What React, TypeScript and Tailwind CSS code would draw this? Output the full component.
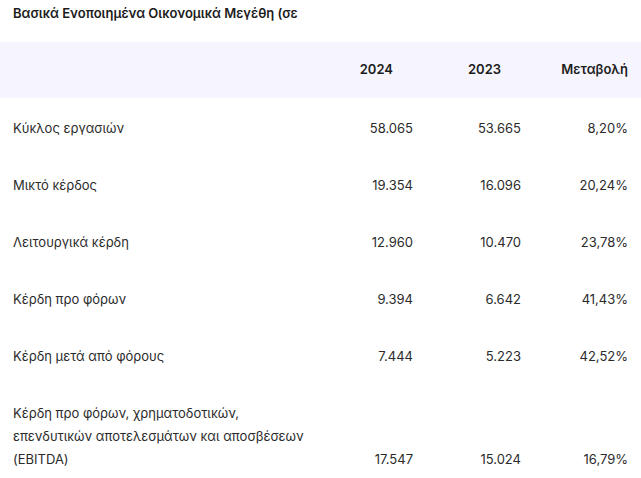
import React from 'react';

const rows = [
  { label: 'Κύκλος εργασιών', a: '58.065', b: '53.665', c: '8,20%' },
  { label: 'Μικτό κέρδος', a: '19.354', b: '16.096', c: '20,24%' },
  { label: 'Λειτουργικά κέρδη', a: '12.960', b: '10.470', c: '23,78%' },
  { label: 'Κέρδη προ φόρων', a: '9.394', b: '6.642', c: '41,43%' },
  { label: 'Κέρδη μετά από φόρους', a: '7.444', b: '5.223', c: '42,52%' },
];

const App: React.FC = () => {
  return (
    <div
      className="w-[641px] h-[478px] overflow-hidden bg-white text-[13px] text-[#2b2b2b]"
      style={{ fontFamily: 'Inter, "Noto Sans", sans-serif' }}
    >
      {/* Title */}
      <div className="px-[13px] pt-[3px] h-[42px]">
        <div className="whitespace-nowrap font-semibold text-[#1c1c1c] leading-[20px]">
          Βασικά Ενοποιημένα Οικονομικά Μεγέθη (σε
        </div>
      </div>

      {/* Header */}
      <div className="flex items-center h-[56px] bg-[#f6f5fd] px-[13px] font-semibold text-[#1c1c1c]">
        <div className="flex-1" />
        <div className="w-[100px] text-right pr-[20px]">2024</div>
        <div className="w-[108px] text-right pr-[20px]">2023</div>
        <div className="w-[107px] text-right">Μεταβολή</div>
      </div>

      {/* Rows */}
      {rows.map((r) => (
        <div key={r.label} className="flex items-center pt-[19px] pb-[15px] px-[13px] leading-[23px]">
          <div className="flex-1">{r.label}</div>
          <div className="w-[100px] text-right">{r.a}</div>
          <div className="w-[108px] text-right">{r.b}</div>
          <div className="w-[107px] text-right">{r.c}</div>
        </div>
      ))}

      <div className="flex items-end pt-[19px] pb-[15px] px-[13px] leading-[23px]">
        <div className="flex-1">
          Κέρδη προ φόρων, χρηματοδοτικών,
          <br />
          επενδυτικών αποτελεσμάτων και αποσβέσεων
          <br />
          (EBITDA)
        </div>
        <div className="w-[100px] text-right">17.547</div>
        <div className="w-[108px] text-right">15.024</div>
        <div className="w-[107px] text-right">16,79%</div>
      </div>
    </div>
  );
};

export default App;
